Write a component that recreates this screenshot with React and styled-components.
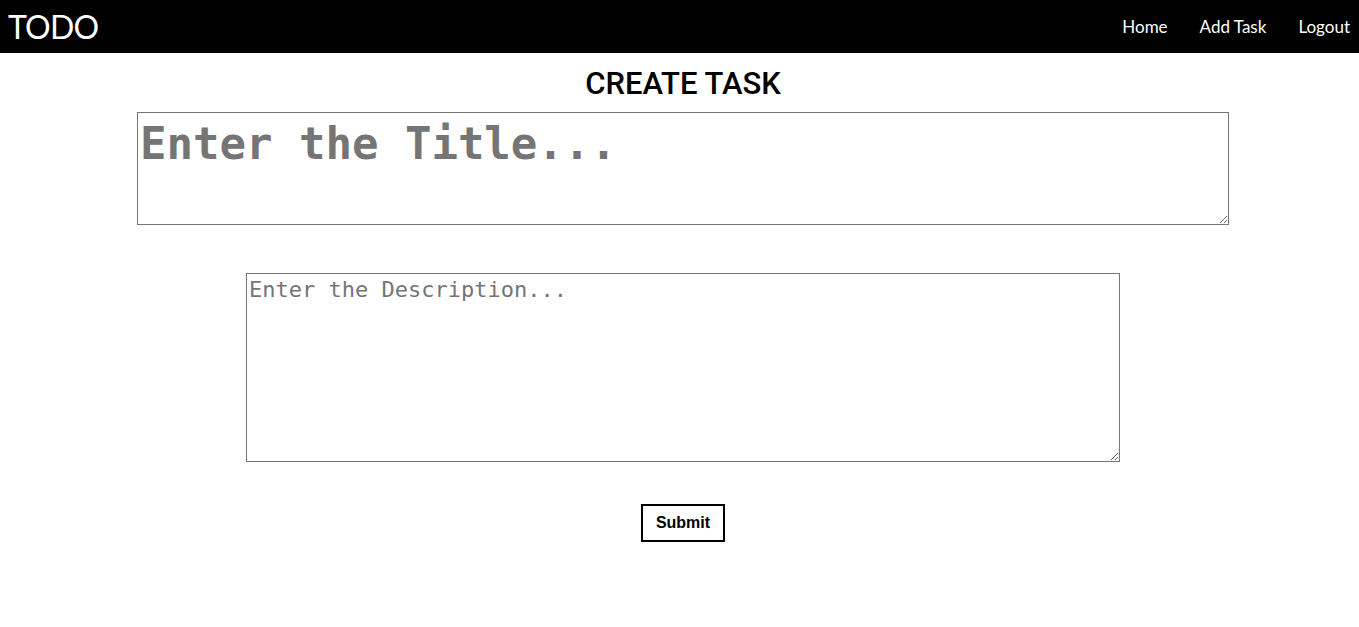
import React, { useState } from 'react';
import styled, { createGlobalStyle } from 'styled-components';

const GlobalStyle = createGlobalStyle`
  body {
    margin: 0;
    background: #fff;
    font-family: "Liberation Sans", Arial, sans-serif;
  }
`;

// Top navigation bar
const NavBar = styled.nav`
  height: 53px;
  background: #000;
  display: flex;
  align-items: center;
  justify-content: space-between;
  padding: 0 9px 0 8px;
  box-sizing: border-box;
`;

const Brand = styled.div`
  font-family: Lato, "Open Sans", sans-serif;
  font-size: 32px;
  color: #fff;
  letter-spacing: -0.8px;
`;

const NavLinks = styled.div`
  display: flex;
  gap: 32px;
`;

const NavLink = styled.a`
  font-family: Lato, "Open Sans", sans-serif;
  font-size: 17px;
  color: #fff;
  text-decoration: none;
  cursor: pointer;
`;

// Form area
const Main = styled.main`
  display: flex;
  flex-direction: column;
  align-items: center;
  padding-left: 7px;
`;

const Heading = styled.h1`
  font-family: Roboto, "Liberation Sans", sans-serif;
  font-weight: 500;
  font-size: 31px;
  line-height: 36px;
  margin: 13px 0 10px;
  color: #000;
`;

const TextArea = styled.textarea`
  box-sizing: border-box;
  width: ${(p) => p.$width};
  height: ${(p) => p.$height}px;
  margin-bottom: ${(p) => p.$gap}px;
  border: 1px solid #767676;
  padding: ${(p) => p.$padTop}px 2px 2px;
  font-family: "DejaVu Sans Mono", "Liberation Mono", monospace;
  font-size: ${(p) => p.$size}px;
  font-weight: ${(p) => (p.$bold ? 700 : 400)};
  color: #000;
  outline: none;

  &::placeholder {
    color: #757575;
  }
`;

const SubmitButton = styled.button`
  width: 84px;
  height: 38px;
  background: #fff;
  border: 2px solid #000;
  font-family: "Liberation Sans", Arial, sans-serif;
  font-size: 16px;
  font-weight: 700;
  color: #000;
  cursor: pointer;
`;

const App = () => {
  const [title, setTitle] = useState('');
  const [description, setDescription] = useState('');

  return (
    <>
      <GlobalStyle />
      <NavBar>
        <Brand>TODO</Brand>
        <NavLinks>
          <NavLink>Home</NavLink>
          <NavLink>Add Task</NavLink>
          <NavLink>Logout</NavLink>
        </NavLinks>
      </NavBar>
      <Main>
        <Heading>CREATE TASK</Heading>
        <TextArea
          $width="1092px"
          $height={113}
          $gap={48}
          $size={44}
          $padTop={5}
          $bold
          placeholder="Enter the Title..."
          value={title}
          onChange={(e) => setTitle(e.target.value)}
        />
        <TextArea
          $width="874px"
          $height={189}
          $gap={42}
          $size={22}
          $padTop={3}
          placeholder="Enter the Description..."
          value={description}
          onChange={(e) => setDescription(e.target.value)}
        />
        <SubmitButton>Submit</SubmitButton>
      </Main>
    </>
  );
};

export default App;
